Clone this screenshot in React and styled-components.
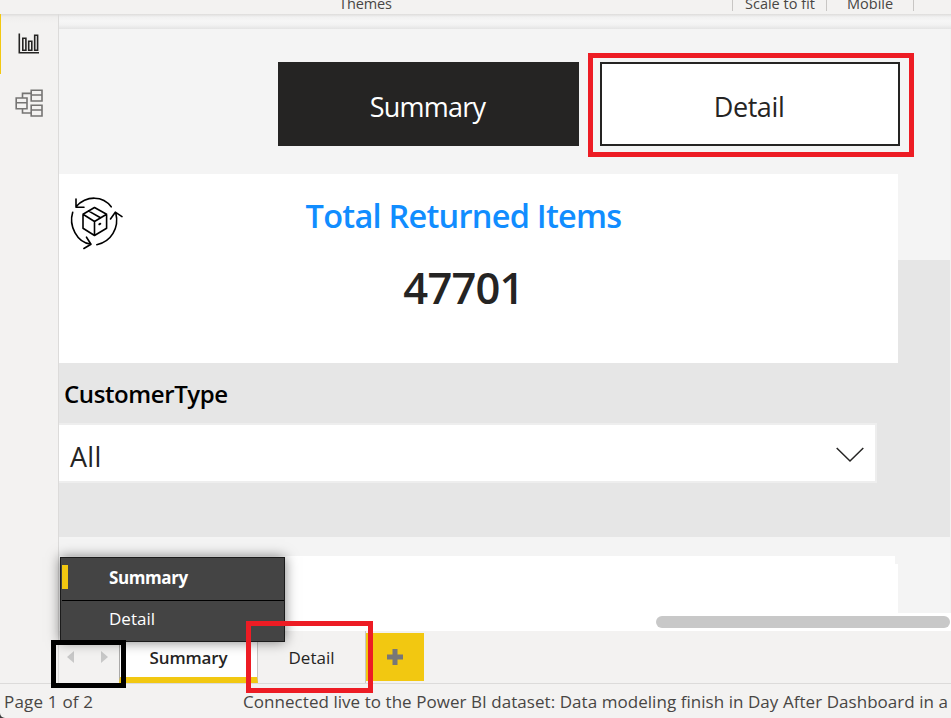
import React from "react";
import styled, { createGlobalStyle } from "styled-components";

const GlobalStyle = createGlobalStyle`
  * { box-sizing: border-box; }
  html, body { margin: 0; padding: 0; overflow: hidden; }
  body { font-family: "Open Sans", "Noto Sans", sans-serif; color: #252423; background: #3a3a3a; }
  button { font: inherit; color: inherit; border: 0; padding: 0; margin: 0; background: none; }
`;

const Window = styled.div`
  position: relative;
  width: 951px;
  height: 718px;
  overflow: hidden;
  display: flex;
  flex-direction: column;
  background: #f3f2f1;
  border-bottom-left-radius: 5px;
`;

const Label = styled.span`
  display: block;
  white-space: nowrap;
  font-size: ${(p) => p.$size}px;
  line-height: ${(p) => p.$line || p.$size}px;
  font-weight: ${(p) => p.$weight || 400};
  letter-spacing: ${(p) => p.$track || 0}px;
  color: ${(p) => p.$color || "#252423"};
`;

const Ribbon = styled.header`
  height: 14px;
  flex: none;
  display: flex;
  overflow: hidden;
  background: #f3f2f1;
`;

const RibbonGroup = styled.div`
  width: ${(p) => p.$width}px;
  height: 11px;
  flex: none;
  padding-left: ${(p) => p.$pad}px;
  border-right: 1px solid #c8c6c4;
  ${Label} { margin-top: -6px; }
`;

const Body = styled.div`
  height: 669px;
  flex: none;
  display: flex;
`;

const Sidebar = styled.nav`
  width: 59px;
  height: 669px;
  flex: none;
  border-right: 1px solid #dcdbda;
  background: linear-gradient(#dddcdb 0, #efeeed 3px, #f3f2f1 9px);
`;

const NavItem = styled.button`
  display: flex;
  width: 58px;
  height: 60px;
  padding-left: ${(p) => (p.$active ? 17 : 14)}px;
  padding-bottom: ${(p) => (p.$active ? 0 : 2)}px;
  border-left: 1px solid ${(p) => (p.$active ? "#f2c811" : "transparent")};
  align-items: center;
`;

const Workspace = styled.main`
  width: 892px;
  flex: none;
  display: flex;
  flex-direction: column;
`;

const CanvasEdge = styled.div`
  height: 15px;
  flex: none;
  background: linear-gradient(#dddcdb 0, #f1f1f1 3px, #f6f6f6 7px, #f2f2f2 11px, #e4e4e4 15px);
`;

const Canvas = styled.section`
  width: 891px;
  height: 584px;
  flex: none;
  background: linear-gradient(#f4f4f4 231px, #e6e6e6 231px, #e6e6e6 508px, #f4f4f4 508px);
`;

const PageButtons = styled.div`
  height: 145px;
  padding: 33px 0 0 219px;
  display: flex;
  gap: 21px;
`;

const PageButton = styled.button`
  width: ${(p) => (p.$filled ? 301 : 300)}px;
  height: 84px;
  display: flex;
  justify-content: center;
  padding-top: 25px;
  padding-right: 2px;
  border: 2px solid #252423;
  background: ${(p) => (p.$filled ? "#252423" : "#ffffff")};
`;

const Card = styled.article`
  width: 839px;
  height: 189px;
  display: grid;
  grid-template-columns: 64px 1fr 95px;
  background: #ffffff;
`;

const CardIcon = styled.div`
  padding: 20px 0 0 9px;
`;

const CardText = styled.div`
  display: flex;
  flex-direction: column;
  align-items: center;
  gap: 20px;
  padding: 20px 0 0 1px;
`;

const Slicer = styled.div`
  width: 818px;
  height: 193px;
  display: flex;
  flex-direction: column;
`;

const SlicerTitle = styled.div`
  height: 60px;
  padding: 11px 0 0 5px;
`;

const Dropdown = styled.div`
  height: 60px;
  border: 2px solid #eeeeee;
  border-left: 0;
  background: #ffffff;
  display: flex;
  justify-content: space-between;
  padding: 10px 11px 0 11px;
  ${Label} { margin-top: 2px; }
`;

const LowerCard = styled.div`
  width: 839px;
  height: 57px;
  background: #ffffff;
  clip-path: polygon(0 0, 836px 0, 836px 8px, 839px 8px, 839px 100%, 0 100%);
`;

const ScrollTrack = styled.div`
  height: 18px;
  flex: none;
  padding: 3px 1px 0 597px;
  background: #ffffff;
`;

const ScrollThumb = styled.div`
  height: 12px;
  border-radius: 6px;
  background: #c8c8c8;
`;

const PageTabs = styled.div`
  height: 52px;
  flex: none;
  display: flex;
`;

const Pager = styled.div`
  width: 60px;
  display: flex;
  gap: 27px;
  padding: 20px 0 0 8px;
`;

const Tab = styled.button`
  width: ${(p) => p.$width}px;
  height: 52px;
  display: flex;
  justify-content: center;
  padding-top: 14px;
  border-left: ${(p) => (p.$active ? 1 : 0)}px solid #aaa9a8;
  border-right: 1px solid #c8c6c4;
  border-bottom: ${(p) => (p.$active ? "6px solid #f2c811" : "0")};
  background: ${(p) => (p.$active ? "#ffffff" : "#f3f2f1")};
`;

const AddPage = styled.button`
  width: 58px;
  height: 48px;
  margin-top: 2px;
  background: #f2c811;
  display: flex;
  align-items: center;
  justify-content: center;
`;

const StatusBar = styled.footer`
  height: 35px;
  flex: none;
  border-top: 1px solid #dcdbda;
  display: flex;
  padding: 4px 0 0 4px;
`;

const StatusCell = styled.div`
  width: ${(p) => p.$width}px;
  flex: none;
`;

const PageMenu = styled.div`
  position: absolute;
  left: 60px;
  top: 557px;
  width: 225px;
  height: 85px;
  border: 1px solid #1b1b1b;
  background: #444444;
  box-shadow: 0 0 12px rgba(0, 0, 0, 0.5);
`;

const MenuItem = styled.div`
  height: ${(p) => (p.$active ? 43 : 40)}px;
  margin-left: 1px;
  display: flex;
  border-bottom: ${(p) => (p.$active ? "1px solid #000" : "0")};
  ${Label} { margin-top: ${(p) => (p.$active ? 7 : 5)}px; }
`;

const MenuMarker = styled.div`
  width: 6px;
  height: 24px;
  margin: 7px 41px 0 0;
  background: ${(p) => (p.$active ? "#f2c811" : "transparent")};
`;

const Highlight = styled.div`
  position: absolute;
  left: ${(p) => p.$x}px;
  top: ${(p) => p.$y}px;
  width: ${(p) => p.$w}px;
  height: ${(p) => p.$h}px;
  border: 5px solid ${(p) => p.$color || "#ed1c24"};
  pointer-events: none;
`;

const ReportIcon = () => (
  <svg width="22" height="22" viewBox="0 0 22 22" fill="none" stroke="#252423" strokeWidth="1.6">
    <path d="M1.3 0.5V19.8H21" />
    <path d="M4.8 5.2H7.9V17.2H4.8ZM10.7 8.2H13.8V17.2H10.7ZM16.7 2.2H19.6V17.2H16.7Z" />
  </svg>
);

const ModelIcon = () => (
  <svg width="28" height="28" viewBox="0 0 28 28" fill="none" stroke="#757473" strokeWidth="1.6">
    <path d="M16.2 1.2H27V12H16.2ZM16.2 6H27M16.2 16.2H27V27H16.2ZM16.2 21H27" />
    <path d="M1.2 9H12V19.7H1.2ZM1.2 13.8H12M7.5 9V4.4H16M7.5 19.7V24H16" />
  </svg>
);

const ReturnsIcon = () => (
  <svg width="56" height="58" viewBox="68 194 56 58" fill="none" stroke="#000" strokeWidth="1.6" strokeLinecap="round" strokeLinejoin="round">
    <path d="M94.5 207.5 106.6 214.3V228.3L94.5 235.5 83 228.3V214.3ZM83 214.3 94.5 221.5 106.6 214.3M94.5 221.5V235.5M88.4 210.9 100.5 217.8" />
    <path d="M111.2 206.8C103 195.5 86.5 195.2 76.2 206.5M76 199V207.2H84" />
    <path d="M72.7 212.3C68.5 226 77 242.3 90.2 244M86.5 237.2 91 244.3 83.9 248.5" />
    <path d="M96.8 244.7C111 241.8 119.5 228 115.8 213M110.5 219 115.3 212.2 122 216.6" />
    <path d="M99.3 224.3 100.3 223.7" strokeWidth="2" />
  </svg>
);

export default function App() {
  return (
    <>
      <GlobalStyle />
      <Window>
        <Ribbon>
          <RibbonGroup $width={733} $pad={339}><Label $size={14.5} $line={20} $track={-0.1} $color="#484644">Themes</Label></RibbonGroup>
          <RibbonGroup $width={94} $pad={12}><Label $size={14.5} $line={20} $color="#484644">Scale to fit</Label></RibbonGroup>
          <RibbonGroup $width={87} $pad={20}><Label $size={14.5} $line={20} $color="#484644">Mobile</Label></RibbonGroup>
        </Ribbon>
        <Body>
          <Sidebar>
            <NavItem $active><ReportIcon /></NavItem>
            <NavItem><ModelIcon /></NavItem>
          </Sidebar>
          <Workspace>
            <CanvasEdge />
            <Canvas>
              <PageButtons>
                <PageButton $filled><Label $size={27} $line={36} $track={-0.75} $color="#fff">Summary</Label></PageButton>
                <PageButton><Label $size={27} $line={36} $track={-0.4}>Detail</Label></PageButton>
              </PageButtons>
              <Card>
                <CardIcon><ReturnsIcon /></CardIcon>
                <CardText>
                  <Label $size={32.5} $line={44} $weight={600} $track={-0.75} $color="#118dff">Total Returned Items</Label>
                  <Label $size={43.5} $line={60} $weight={600} $track={-0.8}>47701</Label>
                </CardText>
              </Card>
              <Slicer>
                <SlicerTitle><Label $size={24} $line={40} $weight={600} $track={-0.4} $color="#000">CustomerType</Label></SlicerTitle>
                <Dropdown>
                  <Label $size={27} $line={40} $track={0.3}>All</Label>
                  <svg width="28" height="40" viewBox="0 0 28 40" fill="none" stroke="#252423" strokeWidth="1.5"><path d="M0.7 13 14 26 27.3 13" /></svg>
                </Dropdown>
              </Slicer>
              <LowerCard />
            </Canvas>
            <ScrollTrack><ScrollThumb /></ScrollTrack>
            <PageTabs>
              <Pager>
                <svg width="7" height="12" viewBox="0 0 7 12"><path d="M7 0V12L0 6Z" fill="#c8c8c8" /></svg>
                <svg width="7" height="12" viewBox="0 0 7 12"><path d="M0 0V12L7 6Z" fill="#c8c8c8" /></svg>
              </Pager>
              <Tab $active $width={139}><Label $size={17} $line={26} $weight={600} $track={-0.15}>Summary</Label></Tab>
              <Tab $width={108}><Label $size={17} $line={26}>Detail</Label></Tab>
              <AddPage><svg width="16" height="16" viewBox="0 0 16 16"><path d="M8 0V16M0 8H16" stroke="#777" strokeWidth="5" /></svg></AddPage>
            </PageTabs>
          </Workspace>
        </Body>
        <StatusBar>
          <StatusCell $width={239}><Label $size={17} $line={28} $track={0.2} $color="#484644">Page 1 of 2</Label></StatusCell>
          <Label $size={17} $line={28} $track={0.05} $color="#484644">Connected live to the Power BI dataset: Data modeling finish in Day After Dashboard in a</Label>
        </StatusBar>
        <PageMenu>
          <MenuItem $active><MenuMarker $active /><Label $size={17} $line={25} $weight={700} $track={-0.4} $color="#fff">Summary</Label></MenuItem>
          <MenuItem><MenuMarker /><Label $size={17} $line={25} $color="#fff">Detail</Label></MenuItem>
        </PageMenu>
        <Highlight $x={588} $y={53} $w={326} $h={104} />
        <Highlight $x={51} $y={640} $w={75} $h={48} $color="#000" />
        <Highlight $x={246} $y={621} $w={127} $h={72} />
      </Window>
    </>
  );
}
